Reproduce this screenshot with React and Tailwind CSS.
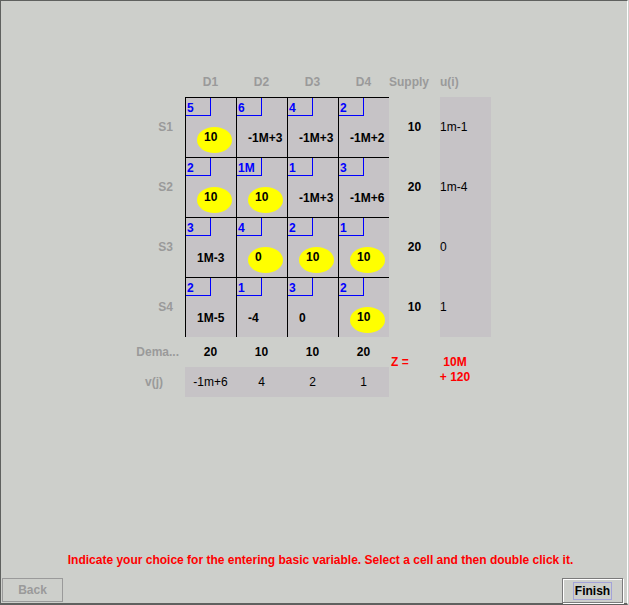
import React from "react";

// transportation tableau data
const rows = [
  { name: "S1", costs: ["5", "6", "4", "2"], vals: [{ e: "10" }, "-1M+3", "-1M+3", "-1M+2"], supply: "10", u: "1m-1" },
  { name: "S2", costs: ["2", "1M", "1", "3"], vals: [{ e: "10" }, { e: "10" }, "-1M+3", "-1M+6"], supply: "20", u: "1m-4" },
  { name: "S3", costs: ["3", "4", "2", "1"], vals: ["1M-3", { e: "0" }, { e: "10" }, { e: "10" }], supply: "20", u: "0" },
  { name: "S4", costs: ["2", "1", "3", "2"], vals: ["1M-5", "-4", "0", { e: "10" }], supply: "10", u: "1" },
];
const demand = ["20", "10", "10", "20"];
const vj = ["-1m+6", "4", "2", "1"];

const Cell = ({ cost, val }) => (
  <div className="box-border h-[60px] border-l border-t border-black bg-[#c6c3c6]">
    <div className="box-border h-[18px] w-[25px] border-b border-r border-[#0000ff] pl-[1px] pt-[3px] font-bold text-[#0000ff]">
      {cost}
    </div>
    {typeof val === "object" ? (
      <div className="ml-[11px] mt-[11px] h-[26px] w-[35px] rounded-[50%] bg-[#ffff00] pl-[7px] pt-[3px] font-bold text-black">
        {val.e}
      </div>
    ) : (
      <div className="mt-[15px] pl-[11px] font-bold text-black">{val}</div>
    )}
  </div>
);

export default function App() {
  return (
    <div className="h-[605px] w-[629px] overflow-hidden bg-[#cdcfcb] font-['Liberation_Sans',Arial,sans-serif] text-[12px] leading-[14px]">
      <div className="box-border flex h-[605px] w-[628px] flex-col border-b-2 border-l border-r border-t border-b-[#5f615f] border-l-[#5f615f] border-r-white border-t-[#5f615f]">
        <div className="mt-[66px] grid grid-cols-[184px_51px_51px_51px_51px_51px_51px] grid-rows-[30px_60px_60px_60px_60px_30px_30px]">
          {/* header */}
          <div />
          {["D1", "D2", "D3", "D4"].map((d) => (
            <div key={d} className="flex items-center justify-center font-bold text-[#9a9a9a]">
              {d}
            </div>
          ))}
          <div className="flex items-center font-bold text-[#9a9a9a]">Supply</div>
          <div className="flex items-center font-bold text-[#9a9a9a]">u(i)</div>

          {rows.map((r) => (
            <React.Fragment key={r.name}>
              <div className="flex items-center justify-end pr-[12px] font-bold text-[#9a9a9a]">{r.name}</div>
              {r.costs.map((c, i) => (
                <Cell key={i} cost={c} val={r.vals[i]} />
              ))}
              <div className="flex items-center justify-center font-bold text-black">{r.supply}</div>
              <div className="flex items-center bg-[#c6c3c6] text-black">{r.u}</div>
            </React.Fragment>
          ))}

          {/* demand */}
          <div className="flex items-center justify-end pr-[6px] font-bold text-[#9a9a9a]">Dema...</div>
          {demand.map((d, i) => (
            <div key={i} className="flex items-center justify-center font-bold text-black">
              {d}
            </div>
          ))}
          <div className="col-span-2 row-span-2 flex pt-[18px] font-bold text-[#ff0000]">
            <div className="w-[51px] pl-[2px]">Z =</div>
            <div className="flex w-[30px] flex-col items-center whitespace-nowrap leading-[15px]">
              <div>10M</div>
              <div>+ 120</div>
            </div>
          </div>

          {/* v(j) */}
          <div className="flex items-center justify-end pr-[22px] font-bold text-[#9a9a9a]">v(j)</div>
          {vj.map((v, i) => (
            <div key={i} className="flex items-center justify-center bg-[#c6c3c6] text-black">
              {v}
            </div>
          ))}
        </div>

        <div className="mt-[156px] pl-[13px] text-center font-bold text-[#ff0000]">
          Indicate your choice for the entering basic variable. Select a cell and then double click it.
        </div>

        <div className="mt-[11px] flex items-start">
          <button className="ml-[1px] box-border h-[24px] w-[61px] border border-[#9a9a9a] font-bold text-[#9a9a9a]">
            Back
          </button>
          <button className="ml-auto mr-[4px] box-border flex h-[25px] w-[61px] items-center justify-center border border-[#7b7b7b] font-bold text-black shadow-[inset_1px_1px_0_#fff,1px_1px_0_#fff]">
            <span className="border border-[#a3a3d9] px-[1px] leading-[16px]">Finish</span>
          </button>
        </div>
      </div>
    </div>
  );
}
